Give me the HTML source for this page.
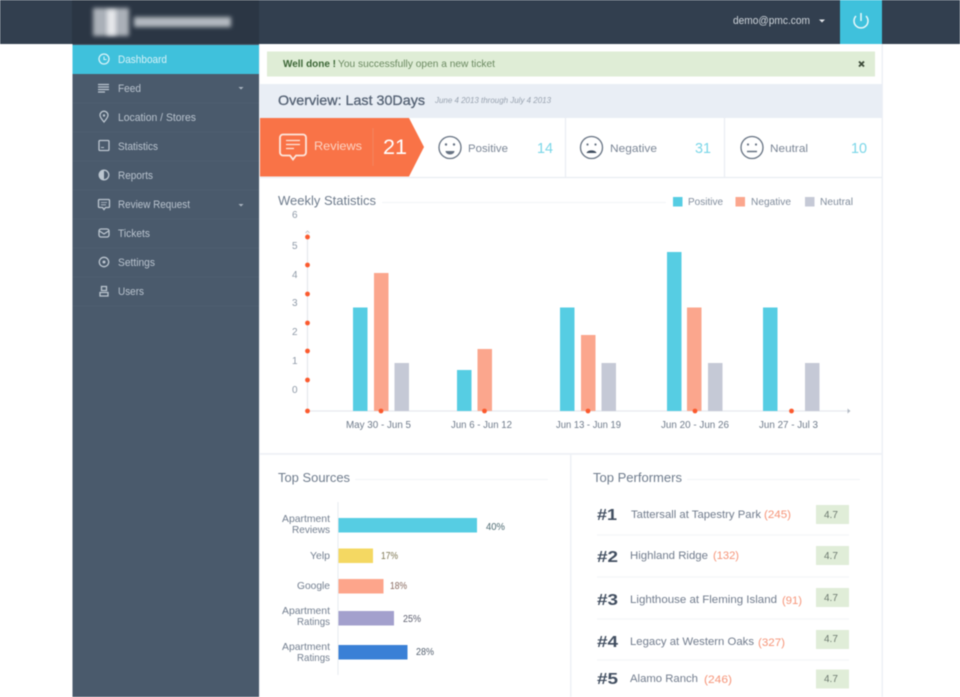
<!DOCTYPE html>
<html><head><meta charset="utf-8"><style>
html,body{margin:0;padding:0;background:#fff;width:960px;height:697px;overflow:hidden}
svg{display:block;filter:blur(.6px)}
text{font-family:"Liberation Sans",sans-serif}
.n{font-size:11px;fill:#b9c3ce}
.h{font-size:13px;fill:#6f7c8d}
.l{font-size:10px;fill:#808c9c}
.s{font-size:11px;fill:#7b8696}
.c{font-size:15px;fill:#7ad6e8}
.r{font-size:11px;fill:#717c8d}
.o{font-size:11px;fill:#f69478}
.k{font-size:16px;font-weight:bold;fill:#414e60}
.b{font-size:10px;fill:#6c796f}
.y{font-size:10px;fill:#8f9aa8}
.i{fill:none;stroke:#bcc6d0;stroke-width:1.3}
.f{fill:none;stroke:#667282;stroke-width:1.3}
</style></head><body>
<svg width="960" height="697" viewBox="0 0 960 697" xmlns="http://www.w3.org/2000/svg">
<defs><filter id="bl" x="-30%" y="-60%" width="160%" height="220%"><feGaussianBlur stdDeviation="2.2"/></filter></defs>
<rect width="960" height="697" fill="#fff"/>
<!-- top bar -->
<rect width="960" height="44" fill="#323f4f"/>
<rect x="72" width="187" height="44" fill="#2b3644"/>
<rect x="93" y="8" width="36" height="28" fill="#aab0b8" filter="url(#bl)"/>
<rect x="107" y="10" width="9" height="25" fill="#e6e8eb" filter="url(#bl)"/>
<rect x="134" y="17" width="97" height="10" fill="#b3b9c0" filter="url(#bl)"/>
<text x="733" y="24" class="n" textLength="77" lengthAdjust="spacingAndGlyphs" style="fill:#cfd5db">demo@pmc.com</text>
<path d="M819 19.500h6l-3 3z" fill="#e3e6ea"/>
<rect x="840" width="42" height="44" fill="#3fc1dc"/>
<path d="M856 16a7 7 0 1 0 10 0" fill="none" stroke="#eaf8fb" stroke-width="1.500"/>
<path d="M861 13v8" stroke="#eaf8fb" stroke-width="1.500"/>
<!-- sidebar -->
<rect x="72.500" y="44" width="186.500" height="653" fill="#4a5a6c"/>
<rect x="72.500" y="45" width="186.500" height="29" fill="#3fc1dc"/>
<g stroke="#4f5f71" stroke-width="1"><path d="M73 103h186M73 132h186M73 161h186M73 190h186M73 219h186M73 248h186M73 277h186M73 306h186"/></g>
<text x="118" y="63" class="n" textLength="49" lengthAdjust="spacingAndGlyphs" style="fill:#d8f2f8">Dashboard</text>
<text x="118" y="92" class="n" textLength="23" lengthAdjust="spacingAndGlyphs">Feed</text>
<text x="118" y="121" class="n" textLength="78" lengthAdjust="spacingAndGlyphs">Location / Stores</text>
<text x="118" y="150" class="n" textLength="40" lengthAdjust="spacingAndGlyphs">Statistics</text>
<text x="118" y="179" class="n" textLength="35" lengthAdjust="spacingAndGlyphs">Reports</text>
<text x="118" y="208" class="n" textLength="72" lengthAdjust="spacingAndGlyphs">Review Request</text>
<text x="118" y="237" class="n" textLength="32" lengthAdjust="spacingAndGlyphs">Tickets</text>
<text x="118" y="266" class="n" textLength="37" lengthAdjust="spacingAndGlyphs">Settings</text>
<text x="118" y="295" class="n" textLength="26" lengthAdjust="spacingAndGlyphs">Users</text>
<path d="M238.500 87h5l-2.500 2.500zM238.500 204h5l-2.500 2.500z" fill="#aab4c0"/>
<!-- sidebar icons -->
<circle cx="104" cy="59" r="5" fill="none" stroke="#d8f3f9" stroke-width="1.300"/>
<path d="M104 56.500v3h2.500" fill="none" stroke="#d8f3f9"/>
<path class="i" d="M98 84.500h11M98 87h11M98 89.500h11M98 92h7" stroke-width="1"/>
<path class="i" d="M104 122c-2.500-3-4-5-4-6.800a4 4 0 0 1 8 0c0 1.800-1.500 3.800-4 6.800z"/><circle cx="104" cy="115.500" r="1.200" fill="#bcc6d0"/>
<rect class="i" x="99" y="140.500" width="10" height="10" rx="1"/><path d="M101 147.500h3" stroke="#bcc6d0"/>
<circle class="i" cx="104" cy="175" r="4.800"/><path d="M104 170.200a4.800 4.800 0 0 0 0 9.600z" fill="#bcc6d0"/>
<path class="i" d="M99.500 199.500h9a1 1 0 0 1 1 1v6a1 1 0 0 1-1 1h-3l-1.500 2-1.500-2h-3a1 1 0 0 1-1-1v-6a1 1 0 0 1 1-1z"/><path d="M101 202.500h6M101 204.800h5" stroke="#bcc6d0" stroke-width=".8"/>
<rect class="i" x="99" y="229" width="10" height="8" rx="2"/><path class="i" d="M99.500 231l4.500 3 4.500-3"/>
<circle class="i" cx="104" cy="262" r="4.700"/><circle cx="104" cy="262" r="1.500" fill="#bcc6d0"/>
<path class="i" d="M101.500 286.500h5v4h-5zM100 296v-3.500h8v3.500z"/>
<!-- content -->
<rect x="259" y="44" width="1" height="653" fill="#eef1f6"/>
<rect x="881.500" y="44" width="1.500" height="653" fill="#eef1f6"/>
<rect x="267" y="51.500" width="608" height="25" fill="#dfedd6"/>
<text x="283" y="67" font-size="10.500" font-weight="bold" fill="#3c6636" textLength="53" lengthAdjust="spacingAndGlyphs">Well done !</text>
<text x="338" y="67" font-size="10.500" fill="#6b8a61" textLength="157" lengthAdjust="spacingAndGlyphs">You successfully open a new ticket</text>
<path d="M859 61.500l5 5M864 61.500l-5 5" stroke="#3c4a38" stroke-width="1.800"/>
<rect x="260" y="84" width="622" height="34" fill="#e9eef5"/>
<text x="278" y="105" font-size="14" fill="#556274" textLength="147" lengthAdjust="spacingAndGlyphs" style="stroke:#556274;stroke-width:.3">Overview: Last 30Days</text>
<text x="435" y="103" font-size="8.500" font-style="italic" fill="#98a2af" textLength="116" lengthAdjust="spacingAndGlyphs">June 4 2013 through July 4 2013</text>
<!-- stat row -->
<path d="M260 177.500h622" stroke="#e9edf2" stroke-width="1.200"/>
<path d="M565.500 118v59M724.500 118v59" stroke="#e9edf2" stroke-width="1.200"/>
<path d="M260 118h149l15 29-15 29.500H260z" fill="#f97347"/>
<path d="M373 128v38" stroke="#f4845e"/>
<path d="M283 134.500h20a3 3 0 0 1 3 3v15a3 3 0 0 1-3 3h-7l-3 4-3-4h-7a3 3 0 0 1-3-3v-15a3 3 0 0 1 3-3z" fill="none" stroke="#fde6dc" stroke-width="1.800"/>
<path d="M286 140.500h14M286 144.500h14M286 148.500h8" stroke="#fde6dc" stroke-width="1.300"/>
<text x="314" y="150" font-size="12" fill="#fcd3c3" textLength="48" lengthAdjust="spacingAndGlyphs">Reviews</text>
<text x="383" y="154" font-size="21" fill="#fff" textLength="24" lengthAdjust="spacingAndGlyphs">21</text>
<circle class="f" cx="450" cy="147.500" r="11"/><circle cx="446" cy="144.500" r="1.200" fill="#667282"/><circle cx="454" cy="144.500" r="1.200" fill="#667282"/><path d="M445.500 151h9a4.500 3.500 0 0 1-9 0z" fill="#667282"/>
<text x="468" y="152" class="s" textLength="40" lengthAdjust="spacingAndGlyphs">Positive</text>
<text x="537" y="153" class="c" textLength="16" lengthAdjust="spacingAndGlyphs">14</text>
<circle class="f" cx="591.500" cy="147.500" r="11"/><circle cx="587.500" cy="144.500" r="1.100" fill="#667282"/><circle cx="595.500" cy="144.500" r="1.100" fill="#667282"/><path d="M586.500 153c1-3.500 9-3.500 10 0z" fill="#3f4c5e"/>
<text x="610" y="152" class="s" textLength="47" lengthAdjust="spacingAndGlyphs">Negative</text>
<text x="695" y="153" class="c" textLength="16" lengthAdjust="spacingAndGlyphs">31</text>
<circle class="f" cx="752" cy="147.500" r="11"/><circle cx="748" cy="144.500" r="1.100" fill="#667282"/><circle cx="756" cy="144.500" r="1.100" fill="#667282"/><path d="M747 151.500h10" stroke="#667282" stroke-width="1.500"/>
<text x="770" y="152" class="s" textLength="38" lengthAdjust="spacingAndGlyphs">Neutral</text>
<text x="851" y="153" class="c" textLength="16" lengthAdjust="spacingAndGlyphs">10</text>
<!-- weekly -->
<text x="278" y="205" class="h" textLength="98" lengthAdjust="spacingAndGlyphs">Weekly Statistics</text>
<path d="M382 202.500h284" stroke="#f2f4f7"/>
<rect x="673" y="197" width="9.500" height="9.500" fill="#56cde3"/><text x="688" y="205" class="l" textLength="35" lengthAdjust="spacingAndGlyphs">Positive</text>
<rect x="735.500" y="197" width="9.500" height="9.500" fill="#fba68d"/><text x="751" y="205" class="l" textLength="40" lengthAdjust="spacingAndGlyphs">Negative</text>
<rect x="805" y="197" width="9.500" height="9.500" fill="#c5c9d6"/><text x="820" y="205" class="l" textLength="33" lengthAdjust="spacingAndGlyphs">Neutral</text>
<text x="292" y="218" class="y">6</text><text x="292" y="249" class="y">5</text><text x="292" y="278" class="y">4</text><text x="292" y="306" class="y">3</text><text x="292" y="335" class="y">2</text><text x="292" y="364" class="y">1</text><text x="292" y="393" class="y">0</text>
<path d="M307.500 233v178M307 411h542" stroke="#e6e9ee" stroke-width="1.300"/>
<path d="M305.500 233l2-2 2 2" fill="none" stroke="#b8bfc8" stroke-width=".8"/>
<path d="M847.500 408.500l3 2.500-3 2.500z" fill="#b4bbc5"/>
<g fill="#56cde3"><rect x="353" y="307.500" width="14.500" height="103.500"/><rect x="457" y="370" width="14.500" height="41"/><rect x="560" y="307.500" width="14.500" height="103.500"/><rect x="667" y="252" width="14.500" height="159"/><rect x="763" y="307.500" width="14.500" height="103.500"/></g>
<g fill="#fba68d"><rect x="374" y="273" width="14.500" height="138"/><rect x="477.500" y="349" width="14.500" height="62"/><rect x="581" y="335" width="14.500" height="76"/><rect x="687" y="307.500" width="14.500" height="103.500"/></g>
<g fill="#c5c9d6"><rect x="394.500" y="363" width="14.500" height="48"/><rect x="601.500" y="363" width="14.500" height="48"/><rect x="708" y="363" width="14.500" height="48"/><rect x="805" y="363" width="14.500" height="48"/></g>
<g fill="#fb5a2e"><circle cx="307.500" cy="237" r="2.400"/><circle cx="307.500" cy="265" r="2.400"/><circle cx="307.500" cy="294" r="2.400"/><circle cx="307.500" cy="323" r="2.400"/><circle cx="307.500" cy="351" r="2.400"/><circle cx="307.500" cy="380" r="2.400"/><circle cx="307.500" cy="411" r="2.400"/><circle cx="381" cy="411" r="2.400"/><circle cx="484.500" cy="411" r="2.400"/><circle cx="588" cy="411" r="2.400"/><circle cx="695" cy="411" r="2.400"/><circle cx="791.500" cy="411" r="2.400"/></g>
<g font-size="10" fill="#6f7b8b">
<text x="346" y="428" textLength="65" lengthAdjust="spacingAndGlyphs">May 30 - Jun 5</text>
<text x="451" y="428" textLength="61" lengthAdjust="spacingAndGlyphs">Jun 6 - Jun 12</text>
<text x="556" y="428" textLength="65" lengthAdjust="spacingAndGlyphs">Jun 13 - Jun 19</text>
<text x="661" y="428" textLength="68" lengthAdjust="spacingAndGlyphs">Jun 20 - Jun 26</text>
<text x="759" y="428" textLength="59" lengthAdjust="spacingAndGlyphs">Jun 27 - Jul 3</text>
</g>
<!-- bottom panels -->
<rect x="260" y="453" width="622" height="1.800" fill="#eef1f6"/>
<rect x="570" y="453" width="1.500" height="244" fill="#eef1f6"/>
<text x="278" y="482" class="h" textLength="72" lengthAdjust="spacingAndGlyphs">Top Sources</text>
<path d="M355 479.500h193" stroke="#f2f4f7"/>
<path d="M338 502v173" stroke="#e8ecf1"/>
<rect x="338.500" y="518" width="138.500" height="14.500" fill="#56cde3"/>
<rect x="338.500" y="548.500" width="34.500" height="14.500" fill="#f4d862"/>
<rect x="338.500" y="579" width="45" height="14.500" fill="#fda58b"/>
<rect x="338.500" y="611" width="55.500" height="14.500" fill="#a3a0cd"/>
<rect x="338.500" y="645" width="69" height="14.500" fill="#3a80d6"/>
<g font-size="10.500" fill="#737f90">
<text x="282" y="522" textLength="48" lengthAdjust="spacingAndGlyphs">Apartment</text>
<text x="292" y="533" textLength="38" lengthAdjust="spacingAndGlyphs">Reviews</text>
<text x="310" y="559" textLength="20" lengthAdjust="spacingAndGlyphs">Yelp</text>
<text x="297" y="589" textLength="33" lengthAdjust="spacingAndGlyphs">Google</text>
<text x="282" y="614" textLength="48" lengthAdjust="spacingAndGlyphs">Apartment</text>
<text x="297" y="625" textLength="33" lengthAdjust="spacingAndGlyphs">Ratings</text>
<text x="282" y="650" textLength="48" lengthAdjust="spacingAndGlyphs">Apartment</text>
<text x="297" y="661" textLength="33" lengthAdjust="spacingAndGlyphs">Ratings</text>
</g>
<g font-size="10">
<text x="486" y="530" fill="#4d6a72" textLength="19" lengthAdjust="spacingAndGlyphs">40%</text>
<text x="381" y="559" fill="#7c7550" textLength="17" lengthAdjust="spacingAndGlyphs">17%</text>
<text x="390" y="589" fill="#86675c" textLength="17" lengthAdjust="spacingAndGlyphs">18%</text>
<text x="403" y="622" fill="#5e6070" textLength="18" lengthAdjust="spacingAndGlyphs">25%</text>
<text x="416" y="655" fill="#54606f" textLength="18" lengthAdjust="spacingAndGlyphs">28%</text>
</g>
<text x="593" y="482" class="h" textLength="89" lengthAdjust="spacingAndGlyphs">Top Performers</text>
<path d="M687 479.500h173" stroke="#f2f4f7"/>
<path d="M597 535h252M597 577h252M597 619h252M597 660h252" stroke="#f2f4f7"/>
<text x="597" y="520" class="k" textLength="20" lengthAdjust="spacingAndGlyphs">#1</text>
<text x="631" y="518" class="r" textLength="130" lengthAdjust="spacingAndGlyphs">Tattersall at Tapestry Park</text>
<text x="764" y="518" class="o" textLength="27" lengthAdjust="spacingAndGlyphs">(245)</text>
<text x="597" y="562" class="k" textLength="21" lengthAdjust="spacingAndGlyphs">#2</text>
<text x="630" y="559" class="r" textLength="78" lengthAdjust="spacingAndGlyphs">Highland Ridge</text>
<text x="713" y="559" class="o" textLength="26" lengthAdjust="spacingAndGlyphs">(132)</text>
<text x="597" y="605" class="k" textLength="21" lengthAdjust="spacingAndGlyphs">#3</text>
<text x="630" y="603" class="r" textLength="147" lengthAdjust="spacingAndGlyphs">Lighthouse at Fleming Island</text>
<text x="782" y="604" class="o" textLength="20" lengthAdjust="spacingAndGlyphs">(91)</text>
<text x="597" y="647" class="k" textLength="21" lengthAdjust="spacingAndGlyphs">#4</text>
<text x="630" y="645" class="r" textLength="124" lengthAdjust="spacingAndGlyphs">Legacy at Western Oaks</text>
<text x="758" y="646" class="o" textLength="27" lengthAdjust="spacingAndGlyphs">(327)</text>
<text x="597" y="684" class="k" textLength="21" lengthAdjust="spacingAndGlyphs">#5</text>
<text x="630" y="682" class="r" textLength="68" lengthAdjust="spacingAndGlyphs">Alamo Ranch</text>
<text x="704" y="683" class="o" textLength="28" lengthAdjust="spacingAndGlyphs">(246)</text>
<g fill="#e0edd8"><rect x="816" y="505" width="33" height="19"/><rect x="816" y="546" width="33" height="19"/><rect x="816" y="588" width="33" height="19"/><rect x="816" y="630" width="33" height="19"/><rect x="816" y="669.500" width="33" height="19"/></g>
<text x="824" y="518" class="b">4.7</text><text x="824" y="559" class="b">4.7</text><text x="824" y="601" class="b">4.7</text><text x="824" y="642" class="b">4.7</text><text x="824" y="682" class="b">4.7</text>
</svg>
</body></html>
